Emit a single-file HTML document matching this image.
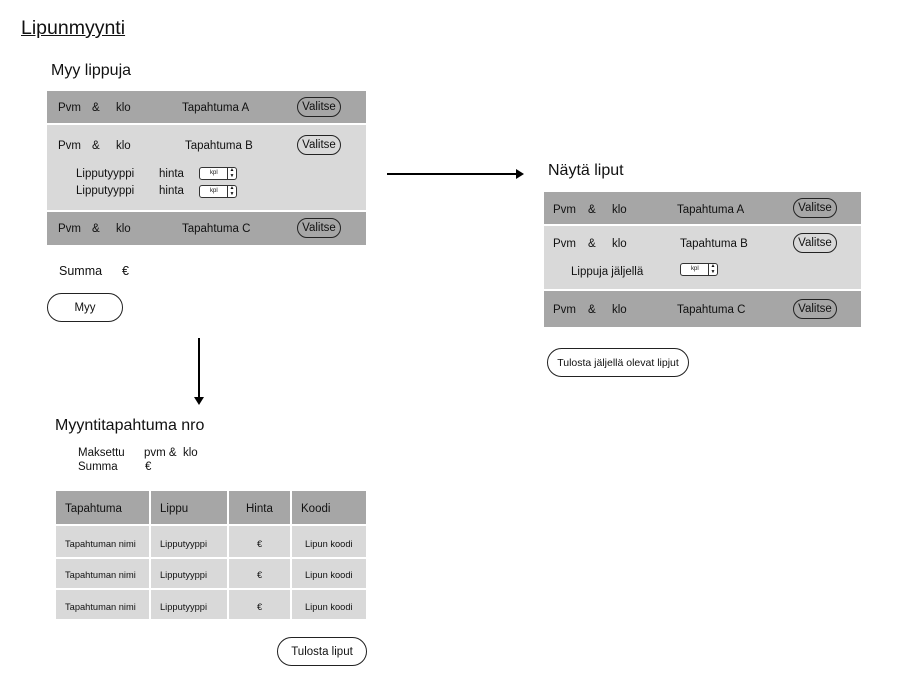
<!DOCTYPE html>
<html><head><meta charset="utf-8"><style>
body{margin:0;width:917px;height:681px;background:#fff;position:relative;overflow:hidden;font-family:"Liberation Sans",sans-serif;color:#111}
.t{position:absolute;white-space:nowrap;font-size:11.5px;line-height:12px;margin-top:1px}
.b{position:absolute}
.d{background:#a6a6a6}.l{background:#d9d9d9}
.btn{position:absolute;border:1.3px solid #222;border-radius:11px;box-sizing:border-box;font-size:11.5px;display:flex;align-items:center;justify-content:center;white-space:nowrap}
.big{border-radius:16px;background:#fff}
.sp{position:absolute;width:38px;height:13px;box-sizing:border-box;border:1px solid #333;border-radius:3px;background:#fff;font-size:6px;line-height:11px;padding-left:10px}
.sp:after{content:"▲\A▼";white-space:pre;position:absolute;right:0;top:-1px;width:8px;height:13px;border-left:1px solid #333;font-size:5px;line-height:6px;text-align:center}
.h{position:absolute;font-size:16px;white-space:nowrap}
.s{font-size:9.3px}
</style></head><body>
<div class="h" style="left:21px;top:17px;font-size:19.5px;text-decoration:underline">Lipunmyynti</div>
<div class="h" style="left:51px;top:62px">Myy lippuja</div>

<div class="b d" style="left:47px;top:91px;width:319px;height:32px"></div>
<div class="b l" style="left:47px;top:125px;width:319px;height:85px"></div>
<div class="b d" style="left:47px;top:212px;width:319px;height:33px"></div>
<div class="t" style="left:58px;top:101px">Pvm</div><div class="t" style="left:92px;top:101px">&amp;</div><div class="t" style="left:116px;top:101px">klo</div><div class="t" style="left:182px;top:101px">Tapahtuma A</div>
<div class="btn" style="left:297px;top:97px;width:44px;height:20px">Valitse</div>
<div class="t" style="left:58px;top:139px">Pvm</div><div class="t" style="left:92px;top:139px">&amp;</div><div class="t" style="left:116px;top:139px">klo</div><div class="t" style="left:185px;top:139px">Tapahtuma B</div>
<div class="btn" style="left:297px;top:135px;width:44px;height:20px">Valitse</div>
<div class="t" style="left:76px;top:167px">Lipputyyppi</div><div class="t" style="left:159px;top:167px">hinta</div><div class="sp" style="left:199px;top:167px">kpl</div>
<div class="t" style="left:76px;top:184px">Lipputyyppi</div><div class="t" style="left:159px;top:184px">hinta</div><div class="sp" style="left:199px;top:185px">kpl</div>
<div class="t" style="left:58px;top:222px">Pvm</div><div class="t" style="left:92px;top:222px">&amp;</div><div class="t" style="left:116px;top:222px">klo</div><div class="t" style="left:182px;top:222px">Tapahtuma C</div>
<div class="btn" style="left:297px;top:218px;width:44px;height:20px">Valitse</div>

<div class="t" style="left:59px;top:264px;font-size:12.5px">Summa</div><div class="t" style="left:122px;top:264px;font-size:12.5px">€</div>
<div class="btn big" style="left:47px;top:293px;width:76px;height:29px">Myy</div>

<svg class="b" style="left:0;top:0" width="917" height="681">
<line x1="199" y1="338" x2="199" y2="398" stroke="#000" stroke-width="2"/><polygon points="194,397 204,397 199,405" fill="#000"/>
<line x1="387" y1="174" x2="517" y2="174" stroke="#000" stroke-width="2"/><polygon points="516,169 516,179 524,174" fill="#000"/>
</svg>

<div class="h" style="left:548px;top:162px">Näytä liput</div>
<div class="b d" style="left:544px;top:192px;width:317px;height:32px"></div>
<div class="b l" style="left:544px;top:226px;width:317px;height:63px"></div>
<div class="b d" style="left:544px;top:291px;width:317px;height:36px"></div>
<div class="t" style="left:553px;top:203px">Pvm</div><div class="t" style="left:588px;top:203px">&amp;</div><div class="t" style="left:612px;top:203px">klo</div><div class="t" style="left:677px;top:203px">Tapahtuma A</div>
<div class="btn" style="left:793px;top:198px;width:44px;height:20px">Valitse</div>
<div class="t" style="left:553px;top:237px">Pvm</div><div class="t" style="left:588px;top:237px">&amp;</div><div class="t" style="left:612px;top:237px">klo</div><div class="t" style="left:680px;top:237px">Tapahtuma B</div>
<div class="btn" style="left:793px;top:233px;width:44px;height:20px">Valitse</div>
<div class="t" style="left:571px;top:265px">Lippuja jäljellä</div><div class="sp" style="left:680px;top:263px">kpl</div>
<div class="t" style="left:553px;top:303px">Pvm</div><div class="t" style="left:588px;top:303px">&amp;</div><div class="t" style="left:612px;top:303px">klo</div><div class="t" style="left:677px;top:303px">Tapahtuma C</div>
<div class="btn" style="left:793px;top:299px;width:44px;height:20px">Valitse</div>
<div class="btn big" style="left:547px;top:348px;width:142px;height:29px;font-size:10.5px">Tulosta jäljellä olevat lipjut</div>

<div class="h" style="left:55px;top:417px">Myyntitapahtuma nro</div>
<div class="t" style="left:78px;top:446px">Maksettu</div><div class="t" style="left:144px;top:446px">pvm &amp;&nbsp; klo</div>
<div class="t" style="left:78px;top:460px">Summa</div><div class="t" style="left:145px;top:460px">€</div>

<div class="b d" style="left:56px;top:491px;width:93px;height:33px"></div>
<div class="b d" style="left:151px;top:491px;width:76px;height:33px"></div>
<div class="b d" style="left:229px;top:491px;width:61px;height:33px"></div>
<div class="b d" style="left:292px;top:491px;width:74px;height:33px"></div>
<div class="t" style="left:65px;top:502px">Tapahtuma</div><div class="t" style="left:160px;top:502px">Lippu</div><div class="t" style="left:246px;top:502px">Hinta</div><div class="t" style="left:301px;top:502px">Koodi</div>

<div class="b l" style="left:56px;top:526px;width:93px;height:31px"></div><div class="b l" style="left:151px;top:526px;width:76px;height:31px"></div><div class="b l" style="left:229px;top:526px;width:61px;height:31px"></div><div class="b l" style="left:292px;top:526px;width:74px;height:31px"></div>
<div class="b l" style="left:56px;top:559px;width:93px;height:29px"></div><div class="b l" style="left:151px;top:559px;width:76px;height:29px"></div><div class="b l" style="left:229px;top:559px;width:61px;height:29px"></div><div class="b l" style="left:292px;top:559px;width:74px;height:29px"></div>
<div class="b l" style="left:56px;top:590px;width:93px;height:29px"></div><div class="b l" style="left:151px;top:590px;width:76px;height:29px"></div><div class="b l" style="left:229px;top:590px;width:61px;height:29px"></div><div class="b l" style="left:292px;top:590px;width:74px;height:29px"></div>

<div class="t s" style="left:65px;top:537px">Tapahtuman nimi</div><div class="t s" style="left:160px;top:537px">Lipputyyppi</div><div class="t s" style="left:257px;top:537px">€</div><div class="t s" style="left:305px;top:537px">Lipun koodi</div>
<div class="t s" style="left:65px;top:568px">Tapahtuman nimi</div><div class="t s" style="left:160px;top:568px">Lipputyyppi</div><div class="t s" style="left:257px;top:568px">€</div><div class="t s" style="left:305px;top:568px">Lipun koodi</div>
<div class="t s" style="left:65px;top:600px">Tapahtuman nimi</div><div class="t s" style="left:160px;top:600px">Lipputyyppi</div><div class="t s" style="left:257px;top:600px">€</div><div class="t s" style="left:305px;top:600px">Lipun koodi</div>

<div class="btn big" style="left:277px;top:637px;width:90px;height:29px">Tulosta liput</div>
</body></html>
